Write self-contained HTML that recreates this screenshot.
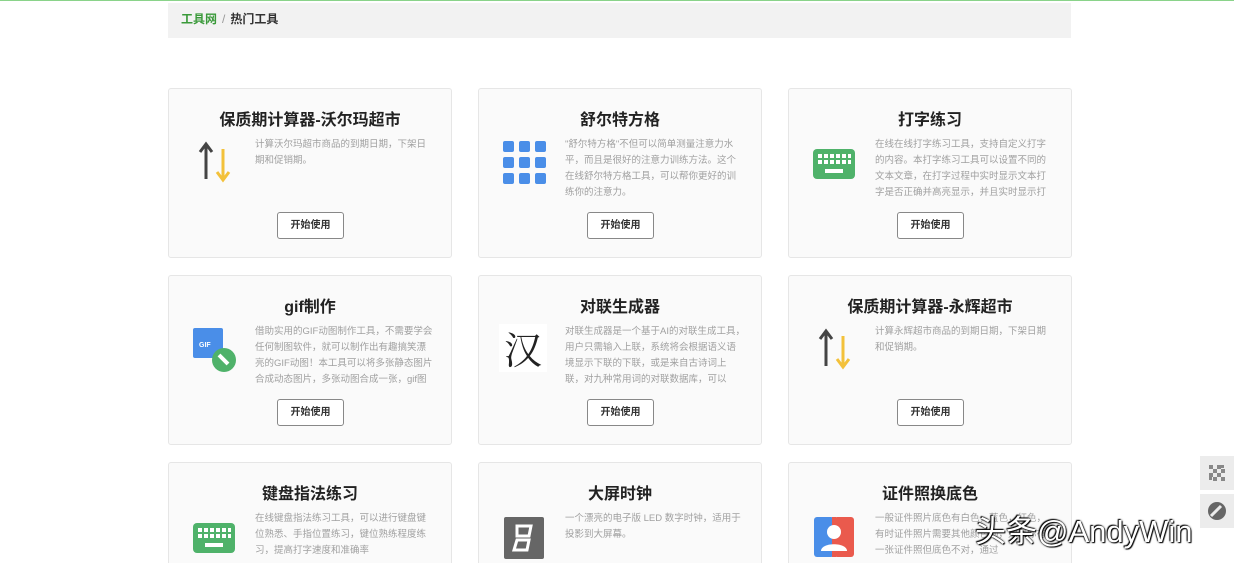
<!DOCTYPE html>
<html style="width:1234px;height:563px;overflow:hidden"><head><meta charset="utf-8"><style>
*{margin:0;padding:0;box-sizing:border-box}
body{width:1234px;height:563px;overflow:hidden;background:#fff;font-family:"Liberation Sans","Noto Sans CJK SC",sans-serif;position:relative}
.top{position:absolute;left:0;top:0;width:1234px;height:1px;background:#8ad38a}
.bc{position:absolute;left:168px;top:3px;width:903px;height:35px;background:#f2f2f2;font-size:12px;line-height:33px;padding-left:13px;color:#333;font-weight:bold}
.bc .g{color:#3a9a3a}
.bc .s{color:#999;margin:0 5px;font-weight:normal}
.card{position:absolute;width:284px;height:170px;border:1px solid #e6e6e6;border-radius:3px;background:#fafafa;overflow:hidden}
.r3{height:101px;border-bottom:none;border-radius:3px 3px 0 0}
.t{position:absolute;left:0;right:0;top:17px;text-align:center;font-size:16px;font-weight:bold;color:#222}
.d{position:absolute;left:86px;top:48px;width:180px;height:64px;overflow:hidden;font-size:9.5px;line-height:16px;color:#a0a0a0}
.b{position:absolute;left:108px;top:123px;width:67px;height:27px;border:1px solid #888;border-radius:3px;background:#fff;font-size:10px;text-align:center;line-height:25px;color:#333;font-weight:bold}
.ic{position:absolute}
.wm{position:absolute;left:975px;top:506px;font-size:31px;color:#fff;font-family:"Liberation Sans","Noto Sans CJK SC",sans-serif;text-shadow:0 0 2px #000,1px 1px 1px #000,-1px -1px 1px #000}
.side{position:absolute;left:1200px;width:34px;height:34px;background:#ececec}
</style></head><body>
<div class="top"></div>
<div class="bc"><span class="g">工具网</span><span class="s">/</span>热门工具</div>

<div class="card" style="left:168px;top:88px">
<div class="t">保质期计算器-沃尔玛超市</div>
<svg class="ic" style="left:26px;top:50px" width="40" height="46"><path d="M11 40V6M5 13l6-8 6 8" stroke="#444" stroke-width="3" fill="none"/><path d="M28 10v30M22 33l6 8 6-8" stroke="#f3c13a" stroke-width="3" fill="none"/></svg>
<div class="d">计算沃尔玛超市商品的到期日期，下架日期和促销期。</div>
<div class="b">开始使用</div></div>

<div class="card" style="left:478px;top:88px">
<div class="t">舒尔特方格</div>
<svg class="ic" style="left:24px;top:52px" width="44" height="44"><g fill="#4a8ee8"><rect x="0" y="0" width="11" height="11" rx="2"/><rect x="16" y="0" width="11" height="11" rx="2"/><rect x="32" y="0" width="11" height="11" rx="2"/><rect x="0" y="16" width="11" height="11" rx="2"/><rect x="16" y="16" width="11" height="11" rx="2"/><rect x="32" y="16" width="11" height="11" rx="2"/><rect x="0" y="32" width="11" height="11" rx="2"/><rect x="16" y="32" width="11" height="11" rx="2"/><rect x="32" y="32" width="11" height="11" rx="2"/></g></svg>
<div class="d">"舒尔特方格"不但可以简单测量注意力水平，而且是很好的注意力训练方法。这个在线舒尔特方格工具，可以帮你更好的训练你的注意力。</div>
<div class="b">开始使用</div></div>

<div class="card" style="left:788px;top:88px">
<div class="t">打字练习</div>
<svg class="ic" style="left:24px;top:60px" width="42" height="30"><rect width="42" height="30" rx="4" fill="#4fb26a"/><g fill="#fff"><rect x="5" y="5" width="4" height="4"/><rect x="11" y="5" width="4" height="4"/><rect x="17" y="5" width="4" height="4"/><rect x="23" y="5" width="4" height="4"/><rect x="29" y="5" width="4" height="4"/><rect x="35" y="5" width="3" height="4"/><rect x="5" y="11" width="4" height="4"/><rect x="11" y="11" width="4" height="4"/><rect x="17" y="11" width="4" height="4"/><rect x="23" y="11" width="4" height="4"/><rect x="29" y="11" width="4" height="4"/><rect x="35" y="11" width="3" height="4"/><rect x="12" y="20" width="18" height="4"/></g></svg>
<div class="d">在线在线打字练习工具，支持自定义打字的内容。本打字练习工具可以设置不同的文本文章，在打字过程中实时显示文本打字是否正确并高亮显示，并且实时显示打</div>
<div class="b">开始使用</div></div>

<div class="card" style="left:168px;top:275px">
<div class="t">gif制作</div>
<svg class="ic" style="left:24px;top:52px" width="46" height="46"><rect x="0" y="0" width="30" height="30" rx="2" fill="#4a8ee8"/><text x="6" y="19" font-size="7" fill="#fff" font-family="Liberation Sans" font-weight="bold">GIF</text><circle cx="31" cy="32" r="12" fill="#4fb26a"/><path d="M26 27l9 9" stroke="#fff" stroke-width="4"/></svg>
<div class="d">借助实用的GIF动图制作工具，不需要学会任何制图软件，就可以制作出有趣搞笑漂亮的GIF动图！本工具可以将多张静态图片合成动态图片，多张动图合成一张，gif图</div>
<div class="b">开始使用</div></div>

<div class="card" style="left:478px;top:275px">
<div class="t">对联生成器</div>
<div class="ic" style="left:20px;top:48px;width:48px;height:48px;background:#fff;font-size:38px;line-height:48px;text-align:center;color:#222;font-family:'Noto Serif CJK SC',serif">汉</div>
<div class="d">对联生成器是一个基于AI的对联生成工具，用户只需输入上联，系统将会根据语义语境显示下联的下联，或是来自古诗词上联，对九种常用词的对联数据库，可以</div>
<div class="b">开始使用</div></div>

<div class="card" style="left:788px;top:275px">
<div class="t">保质期计算器-永辉超市</div>
<svg class="ic" style="left:26px;top:50px" width="40" height="46"><path d="M11 40V6M5 13l6-8 6 8" stroke="#444" stroke-width="3" fill="none"/><path d="M28 10v30M22 33l6 8 6-8" stroke="#f3c13a" stroke-width="3" fill="none"/></svg>
<div class="d">计算永辉超市商品的到期日期，下架日期和促销期。</div>
<div class="b">开始使用</div></div>

<div class="card r3" style="left:168px;top:462px">
<div class="t">键盘指法练习</div>
<svg class="ic" style="left:24px;top:60px" width="42" height="30"><rect width="42" height="30" rx="4" fill="#4fb26a"/><g fill="#fff"><rect x="5" y="5" width="4" height="4"/><rect x="11" y="5" width="4" height="4"/><rect x="17" y="5" width="4" height="4"/><rect x="23" y="5" width="4" height="4"/><rect x="29" y="5" width="4" height="4"/><rect x="35" y="5" width="3" height="4"/><rect x="5" y="11" width="4" height="4"/><rect x="11" y="11" width="4" height="4"/><rect x="17" y="11" width="4" height="4"/><rect x="23" y="11" width="4" height="4"/><rect x="29" y="11" width="4" height="4"/><rect x="35" y="11" width="3" height="4"/><rect x="12" y="20" width="18" height="4"/></g></svg>
<div class="d">在线键盘指法练习工具，可以进行键盘键位熟悉、手指位置练习，键位熟练程度练习，提高打字速度和准确率</div>
</div>

<div class="card r3" style="left:478px;top:462px">
<div class="t">大屏时钟</div>
<svg class="ic" style="left:25px;top:54px" width="40" height="42"><rect width="40" height="42" rx="2" fill="#666"/><path d="M13 9h14l-2 10h-12zM13 23h12l-2 10h-13z" stroke="#fff" stroke-width="3" fill="none"/></svg>
<div class="d">一个漂亮的电子版 LED 数字时钟，适用于投影到大屏幕。</div>
</div>

<div class="card r3" style="left:788px;top:462px">
<div class="t">证件照换底色</div>
<svg class="ic" style="left:25px;top:54px" width="40" height="40"><rect width="20" height="40" rx="3" fill="#4a8ee8"/><rect x="20" width="20" height="40" rx="3" fill="#ea5a4d"/><rect x="18" width="4" height="40" fill="#ea5a4d"/><circle cx="20" cy="15" r="7" fill="#fff"/><path d="M7 34c0-9 26-9 26 0z" fill="#fff"/></svg>
<div class="d">一般证件照片底色有白色，蓝色，红色，有时证件照片需要其他颜色的，如果你有一张证件照但底色不对，通过</div>
</div>

<div class="side" style="top:456px"><svg width="34" height="34"><g fill="#888"><rect x="9" y="9" width="4" height="4"/><rect x="17" y="9" width="4" height="4"/><rect x="13" y="13" width="4" height="4"/><rect x="21" y="13" width="4" height="4"/><rect x="9" y="17" width="4" height="4"/><rect x="17" y="17" width="4" height="4"/><rect x="13" y="21" width="4" height="4"/><rect x="21" y="21" width="4" height="4"/><rect x="21" y="9" width="3" height="3"/><rect x="9" y="21" width="3" height="3"/></g></svg></div>
<div class="side" style="top:494px"><svg width="34" height="34"><circle cx="17" cy="17" r="9" fill="#666"/><path d="M11 22l10-10" stroke="#ececec" stroke-width="3"/></svg></div>
<div class="wm">头条@AndyWin</div>
</body></html>
